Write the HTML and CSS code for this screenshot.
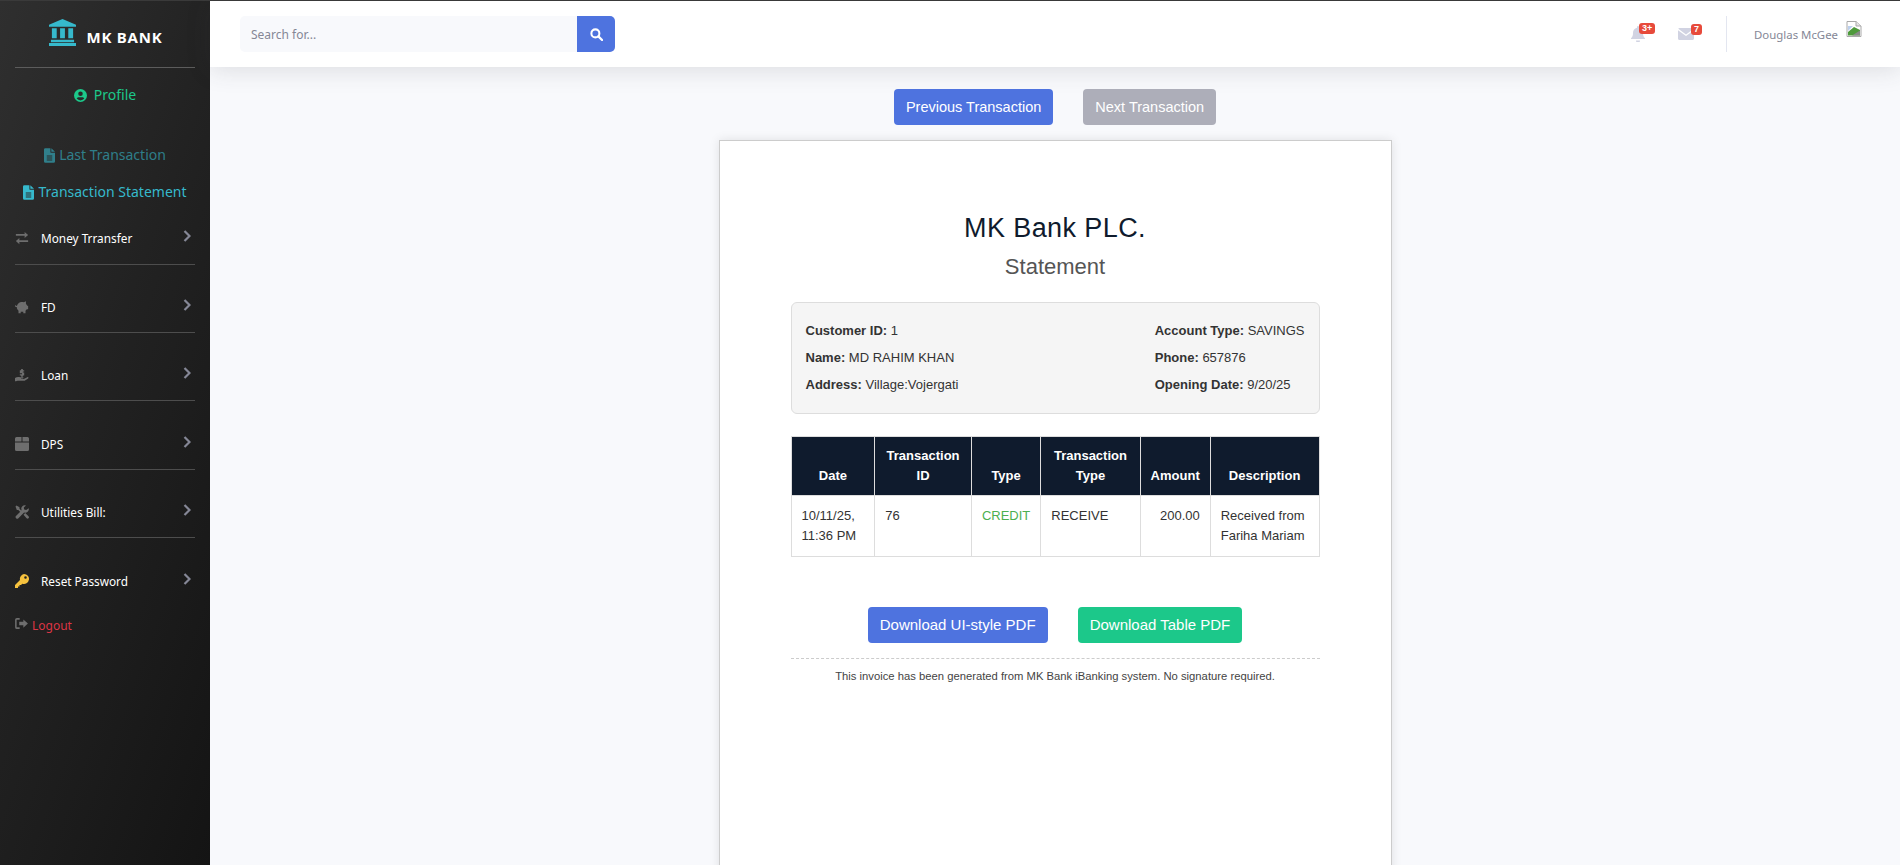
FILE: index.html
```html
<!DOCTYPE html>
<html lang="en">
<head>
    <meta charset="UTF-8">
    <meta name="viewport" content="width=device-width, initial-scale=1.0">
    <title>MK Bank - Statement</title>
    <link rel="stylesheet" href="styles.css">
</head>
<body>

<div class="app">
    <aside class="sidebar">
        <div class="brand">
            <svg class="brand-icon" viewBox="0 0 30 28"><path d="M15 0 L29 6 V8 H1 V6 Z M4 9.500 H9 V20 H4 Z M12.500 9.500 H17.500 V20 H12.500 Z M21 9.500 H26 V20 H21 Z M3 21.500 H27 V24 H3 Z M1 25 H29 V28 H1 Z"/></svg>
            <span>MK BANK</span>
        </div>
        <a class="side-link profile" href="#">
            <svg class="link-icon" viewBox="0 0 16 16"><path d="M8 0a8 8 0 1 0 0 16A8 8 0 0 0 8 0zm0 3a2.800 2.800 0 1 1 0 5.600A2.800 2.800 0 0 1 8 3zm0 11a6.200 6.200 0 0 1-4.700-2.200C3.900 10.600 5 10 6 10h4c1 0 2.100.6 2.700 1.800A6.200 6.200 0 0 1 8 14z"/></svg>
            Profile
        </a>
        <a class="side-link last" href="#">
            <svg class="file-icon" viewBox="0 0 12 16"><path d="M7 0H1.500A1.500 1.500 0 0 0 0 1.500v13A1.500 1.500 0 0 0 1.500 16h9a1.500 1.500 0 0 0 1.500-1.500V5H7.500A.5.5 0 0 1 7 4.500zm1 0v4h4zM3 8h6v1H3zm0 2.200h6v1H3zm0 2.200h6v1H3z" fill-rule="evenodd"/></svg>
            Last Transaction
        </a>
        <a class="side-link statement" href="#">
            <svg class="file-icon" viewBox="0 0 12 16"><path d="M7 0H1.500A1.500 1.500 0 0 0 0 1.500v13A1.500 1.500 0 0 0 1.500 16h9a1.500 1.500 0 0 0 1.500-1.500V5H7.500A.5.5 0 0 1 7 4.500zm1 0v4h4zM3 8h6v1H3zm0 2.200h6v1H3zm0 2.200h6v1H3z" fill-rule="evenodd"/></svg>
            Transaction Statement
        </a>

        <nav class="side-nav">
            <a class="nav-item" href="#">
                <svg class="nav-icon" viewBox="0 0 16 14"><path d="M11 0l4 3.500L11 7V4.500H1v-2h10zM5 7v2.500h10v2H5V14L1 10.500z"/></svg>
                <span class="nav-label">Money Trransfer</span>
                <svg class="chevron" viewBox="0 0 8 12"><path d="M1.500 1l5 5-5 5" /></svg>
            </a>
            <a class="nav-item" href="#">
                <svg class="nav-icon" viewBox="0 0 16 14"><path d="M6 1.500c1-.4 3-.5 4 0l2.500-1v3c.7.6 1.200 1.300 1.400 2H15v4h-1.500c-.4.700-1 1.300-1.500 1.700V14H9.500v-1.500h-3V14H4v-2.800C2.600 10 2 8.700 2 7H.5C0 6 .2 5 1 4.500c0 1 .3 1.300 1.200 1.300C2.800 3.600 4 2.200 6 1.500z"/></svg>
                <span class="nav-label">FD</span>
                <svg class="chevron" viewBox="0 0 8 12"><path d="M1.500 1l5 5-5 5" /></svg>
            </a>
            <a class="nav-item" href="#">
                <svg class="nav-icon" viewBox="0 0 16 14"><path d="M7 0h2v1.500h1.500v1.500H9v1h1.500v3.500H9V9H7V7.500H5.500V6H8V5H5.500V1.500H7zM0 10.500c2-1.500 4-1.500 6-.8h3c1 0 1 1.300 0 1.300H7v.5h3l4-2c1.300-.4 2 .8 1 1.500l-4 2.500H3L1 14H0z"/></svg>
                <span class="nav-label">Loan</span>
                <svg class="chevron" viewBox="0 0 8 12"><path d="M1.500 1l5 5-5 5" /></svg>
            </a>
            <a class="nav-item" href="#">
                <svg class="nav-icon" viewBox="0 0 14 14"><path d="M1.500 0H6.500V4.500H0V1.500A1.500 1.500 0 0 1 1.500 0zM7.500 0H12.500A1.500 1.500 0 0 1 14 1.500V4.500H7.500zM0 5.500H14V12.500A1.500 1.500 0 0 1 12.500 14H1.500A1.500 1.500 0 0 1 0 12.500z"/></svg>
                <span class="nav-label">DPS</span>
                <svg class="chevron" viewBox="0 0 8 12"><path d="M1.500 1l5 5-5 5" /></svg>
            </a>
            <a class="nav-item" href="#">
                <svg class="nav-icon" viewBox="0 0 14 14"><path d="M.5 1.500L1.500.5l3 1.800v1.500l2.700 2.700-1.200 1.200-2.700-2.700H1.800zM13.700 3.200a3.500 3.500 0 0 1-4.600 4.200L3.400 13.200a1.500 1.500 0 0 1-2.400-2.200l5.700-5.700A3.500 3.500 0 0 1 11 .4L8.800 2.600l.4 2 2 .4zM8.500 9.700l1.700-1.700 3.300 3.300a1.300 1.300 0 0 1-1.900 1.900z"/></svg>
                <span class="nav-label">Utilities Bill:</span>
                <svg class="chevron" viewBox="0 0 8 12"><path d="M1.500 1l5 5-5 5" /></svg>
            </a>
            <a class="nav-item no-line" href="#">
                <svg class="nav-icon key" viewBox="0 0 14 14"><path d="M9 0a5 5 0 1 1-1.700 9.700L6 11H4.500v1.500H3V14H0v-3l5-5A5 5 0 0 1 9 0zm1.500 2.200a1.300 1.300 0 1 0 0 2.600 1.300 1.300 0 0 0 0-2.600z" fill-rule="evenodd"/></svg>
                <span class="nav-label">Reset Password</span>
                <svg class="chevron" viewBox="0 0 8 12"><path d="M1.500 1l5 5-5 5" /></svg>
            </a>
        </nav>

        <a class="logout" href="#">
            <svg class="logout-icon" viewBox="0 0 14 12"><path d="M5 0v1.800H2a.5.5 0 0 0-.3.300v7.800c0 .1.100.3.300.3h3V12H2a2 2 0 0 1-2-2V2a2 2 0 0 1 2-2zM9 1.500L14 6 9 10.500V8H4.500V4H9z"/></svg>
            Logout
        </a>
    </aside>

    <div class="main">
        <header class="topbar">
            <form class="search">
                <input class="search-input" type="text" placeholder="Search for...">
                <button class="search-btn" type="button">
                    <svg viewBox="0 0 14 14" width="13" height="13"><circle cx="5.800" cy="5.800" r="4.300" fill="none" stroke="#fff" stroke-width="2.200"/><path d="M9 9l4 4" stroke="#fff" stroke-width="2.400" stroke-linecap="round"/></svg>
                </button>
            </form>
            <div class="top-right">
                <div class="alert-icon">
                    <svg width="14" height="16" viewBox="0 0 14 16"><path d="M7 0a1 1 0 0 1 1 1v.7c2.500.5 4 2.500 4 5 0 3 .5 4 2 5.500v.8H0v-.8C1.500 10.700 2 9.700 2 6.700c0-2.500 1.500-4.500 4-5V1a1 1 0 0 1 1-1zM5 14.500h4a2 2 0 0 1-4 0z" fill="#d1d3e2"/></svg>
                    <span class="badge">3+</span>
                </div>
                <div class="alert-icon mail">
                    <svg width="16" height="12" viewBox="0 0 16 12"><path d="M1.500 0h13c.6 0 1 .3 1.200.8L8 6.500.3.800C.5.300.9 0 1.500 0zM0 2.200l8 5.900 8-5.900v8.300c0 .8-.7 1.500-1.500 1.500h-13C.7 12 0 11.300 0 10.500z" fill="#d1d3e2"/></svg>
                    <span class="badge">7</span>
                </div>
                <div class="top-divider"></div>
                <span class="user-name">Douglas McGee</span>
                <svg class="broken-img" width="16" height="16" viewBox="0 0 16 16"><path d="M1 .5H10L15 5V15.500H1z" fill="#fff" stroke="#a9a9a9"/><path d="M10 .5V5H15" fill="#e4e4e4" stroke="#a9a9a9"/><path d="M2 14.500V11L8 6l6 3v5.500z" fill="#4e9a3b"/><path d="M2 5h5L2 10z" fill="#bcd0ee"/><path d="M6 14.500L14 9.500v5z" fill="#8a8a8a"/></svg>
            </div>
        </header>

        <div class="content">
            <div class="pager">
                <a class="btn btn-primary" href="#">Previous Transaction</a>
                <a class="btn btn-muted" href="#">Next Transaction</a>
            </div>

            <div class="statement-card">
                <h1 class="bank-title">MK Bank PLC.</h1>
                <h2 class="doc-title">Statement</h2>

                <div class="info-box">
                    <div>
                        <p><b>Customer ID:</b> 1</p>
                        <p><b>Name:</b> MD RAHIM KHAN</p>
                        <p><b>Address:</b> Village:Vojergati</p>
                    </div>
                    <div>
                        <p><b>Account Type:</b> SAVINGS</p>
                        <p><b>Phone:</b> 657876</p>
                        <p><b>Opening Date:</b> 9/20/25</p>
                    </div>
                </div>

                <table class="tx-table">
                    <thead>
                        <tr>
                            <th>Date</th>
                            <th>Transaction ID</th>
                            <th>Type</th>
                            <th>Transaction Type</th>
                            <th>Amount</th>
                            <th>Description</th>
                        </tr>
                    </thead>
                    <tbody>
                        <tr>
                            <td>10/11/25, 11:36 PM</td>
                            <td>76</td>
                            <td class="credit">CREDIT</td>
                            <td>RECEIVE</td>
                            <td class="amount">200.00</td>
                            <td>Received from Fariha Mariam</td>
                        </tr>
                    </tbody>
                </table>

                <div class="downloads">
                    <a class="btn btn-primary" href="#">Download UI-style PDF</a>
                    <a class="btn btn-success" href="#">Download Table PDF</a>
                </div>

                <div class="note">This invoice has been generated from MK Bank iBanking system. No signature required.</div>
            </div>
        </div>
    </div>
</div>

</body>
</html>
```

FILE: styles.css
```css
:root {
    --primary: #4e73df;
    --success: #1cc88a;
    --info: #36b9cc;
    --danger: #e74a3b;
    --gray: #858796;
    --light: #f8f9fc;
    --navy: #0f1b2d;
}

* {
    box-sizing: border-box;
}

html, body {
    height: 100%;
}

body {
    margin: 0;
    overflow: hidden;
    background-color: var(--light);
    font-family: "Noto Sans", sans-serif;
    color: var(--gray);
}

a {
    text-decoration: none;
}

.app {
    display: flex;
    height: 100vh;
    border-top: 1px solid #3a3a3a;
}

/* sidebar */
.sidebar {
    width: 210px;
    flex-shrink: 0;
    padding: 0 15px;
    background: linear-gradient(110deg, #2f2f2f 0%, #222 45%, #141414 100%);
}

.brand {
    display: flex;
    align-items: flex-end;
    justify-content: center;
    gap: 8px;
    height: 67px;
    padding-bottom: 21px;
    border-bottom: 1px solid #5c5c5c;
    color: #fff;
    font-size: 15px;
    font-weight: 700;
    line-height: 18px;
    letter-spacing: 0.8px;
}

.brand-icon {
    width: 31px;
    height: 27px;
    fill: var(--info);
}

.side-link {
    display: flex;
    align-items: center;
    justify-content: center;
    gap: 4px;
    font-size: 14px;
    line-height: 20px;
}

.link-icon {
    width: 13px;
    height: 13px;
    margin-right: 3px;
    fill: currentColor;
}

.file-icon {
    width: 11px;
    height: 15px;
    fill: currentColor;
}

.profile {
    margin-top: 17px;
    color: var(--success);
}

.last {
    margin-top: 40px;
    color: var(--info);
    opacity: 0.6;
}

.statement {
    margin-top: 17px;
    color: var(--info);
}

.side-nav {
    margin-top: 7px;
}

.nav-item {
    display: flex;
    align-items: center;
    height: 68.400px;
    padding-top: 17px;
    color: #fff;
    font-size: 11.800px;
    border-bottom: 1px solid #4d4d4d;
}

.nav-item:first-child {
    height: 55.600px;
    padding-top: 3px;
}

.nav-item.no-line {
    padding-top: 18px;
    border-bottom: 0;
}

.nav-icon {
    width: 14px;
    height: 14px;
    fill: #6e6e6e;
    flex-shrink: 0;
}

.nav-icon.key {
    fill: #f6c23e;
}

.nav-label {
    flex: 1;
    margin-left: 12px;
}

.chevron {
    width: 8px;
    height: 12px;
    margin-right: 4px;
    margin-bottom: 4px;
    fill: none;
    stroke: #858796;
    stroke-width: 2.200;
}

.logout {
    display: flex;
    align-items: center;
    gap: 4px;
    margin-top: 10px;
    color: #dc3545;
    font-size: 12px;
}

.logout-icon {
    width: 13px;
    height: 11px;
    margin-bottom: 4px;
    fill: #6e6e6e;
}

/* topbar */
.main {
    flex: 1;
    display: flex;
    flex-direction: column;
    min-width: 0;
}

.topbar {
    display: flex;
    align-items: center;
    justify-content: space-between;
    height: 66px;
    flex-shrink: 0;
    padding: 0 30px;
    background-color: #fff;
    box-shadow: 0 3px 24px rgba(58, 59, 69, .15);
}

.search {
    display: flex;
    width: 375px;
    height: 36px;
}

.search-input {
    flex: 1;
    min-width: 0;
    padding: 0 11px;
    border: 0;
    border-radius: 5px 0 0 5px;
    background-color: var(--light);
    font-family: "Noto Sans", sans-serif;
    font-size: 12px;
}

.search-input::placeholder {
    color: var(--gray);
}

.search-btn {
    display: flex;
    align-items: center;
    justify-content: center;
    width: 38px;
    padding: 0;
    border: 0;
    border-radius: 0 5px 5px 0;
    background-color: var(--primary);
}

.top-right {
    display: flex;
    align-items: center;
    height: 36px;
}

.alert-icon {
    position: relative;
    display: flex;
    margin-right: 33px;
}

.alert-icon.mail {
    margin-right: 32px;
}

.badge {
    position: absolute;
    top: -3px;
    left: 8px;
    padding: 0 3px;
    border-radius: 3px;
    background-color: var(--danger);
    color: #fff;
    font-family: "Liberation Sans", sans-serif;
    font-size: 9px;
    font-weight: 700;
    line-height: 11px;
}

.mail .badge {
    top: -4px;
    left: 13px;
}

.top-divider {
    width: 1px;
    height: 36px;
    margin-right: 27px;
    background-color: #e3e6f0;
}

.user-name {
    font-size: 11.400px;
    margin-right: 8px;
}

.broken-img {
    margin-bottom: 10px;
    margin-right: 8px;
}

/* statement */
.content {
    flex: 1;
    display: flex;
    flex-direction: column;
    align-items: center;
    padding-top: 22px;
    min-height: 0;
}

.pager {
    display: flex;
    gap: 30px;
    margin-bottom: 15px;
}

.btn {
    display: block;
    height: 36px;
    padding: 0 12px;
    border-radius: 4px;
    color: #fff;
    font-family: "Liberation Sans", sans-serif;
    font-size: 14.500px;
    line-height: 36px;
}

.btn-primary {
    background-color: var(--primary);
}

.btn-muted {
    background-color: #adaeb9;
}

.btn-success {
    background-color: var(--success);
}

.statement-card {
    flex-shrink: 0;
    width: 673px;
    min-height: 800px;
    padding: 69px 71px;
    border: 1px solid #ccc;
    background-color: #fff;
    box-shadow: 0 0 10px rgba(0, 0, 0, .1);
    font-family: "Liberation Sans", sans-serif;
    color: #333;
}

.bank-title {
    margin: 0;
    color: var(--navy);
    font-size: 27px;
    font-weight: 400;
    line-height: 36px;
    text-align: center;
    letter-spacing: 0.4px;
}

.doc-title {
    margin: 3px 0 0;
    color: #555;
    font-size: 22px;
    font-weight: 400;
    line-height: 36px;
    text-align: center;
}

.info-box {
    display: flex;
    justify-content: space-between;
    margin-top: 17px;
    padding: 14px 14px 15px;
    border: 1px solid #ddd;
    border-radius: 6px;
    background-color: #f5f5f5;
    font-size: 13px;
}

.info-box p {
    margin: 0;
    line-height: 27px;
}

.tx-table {
    width: 100%;
    margin-top: 22px;
    border-collapse: collapse;
    font-size: 13px;
    line-height: 20px;
}

.tx-table th,
.tx-table td {
    padding: 10px;
    border: 1px solid #ddd;
}

.tx-table th {
    padding-top: 9px;
    padding-bottom: 9px;
    background-color: var(--navy);
    color: #fff;
    vertical-align: bottom;
    text-align: center;
}

.tx-table td {
    vertical-align: top;
}

.credit {
    color: #4caf50;
}

.amount {
    text-align: right;
}

.downloads {
    display: flex;
    justify-content: center;
    gap: 30px;
    margin-top: 50px;
}

.downloads .btn {
    font-size: 15px;
}

.note {
    margin-top: 15px;
    padding-top: 11px;
    border-top: 1px dashed #ccc;
    color: #444;
    font-size: 11.250px;
    text-align: center;
}
```
